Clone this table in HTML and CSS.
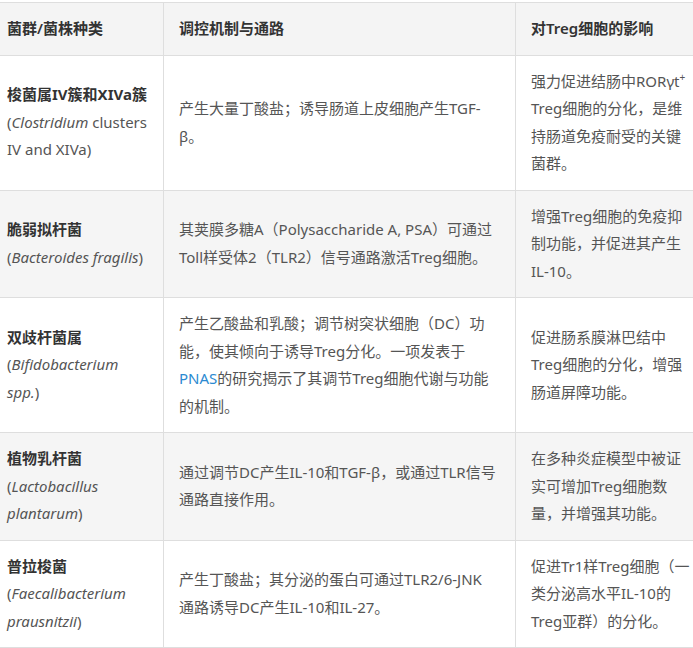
FILE: index.html
```html
<!DOCTYPE html>
<html>
<head>
  <title>肠道菌群与Treg细胞</title>
  <link rel="stylesheet" href="styles.css">
</head>
<body>

  <div class="table-wrap">
    <table class="flora-table">
      <colgroup>
        <col class="col-name">
        <col class="col-mech">
        <col class="col-effect">
      </colgroup>
      <thead>
        <tr>
          <th>菌群/菌株种类</th>
          <th class="mech">调控机制与通路</th>
          <th>对Treg细胞的影响</th>
        </tr>
      </thead>
      <tbody>
        <tr>
          <td><strong>梭菌属IV簇和XIVa簇</strong><br>(<em>Clostridium</em> clusters IV and XIVa)</td>
          <td class="mech">产生大量丁酸盐；诱导肠道上皮细胞产生TGF-β。</td>
          <td>强力促进结肠中RORγt<sup>+</sup> Treg细胞的分化，是维持肠道免疫耐受的关键菌群。</td>
        </tr>
        <tr class="alt">
          <td><strong>脆弱拟杆菌</strong><br>(<em>Bacteroides fragilis</em>)</td>
          <td class="mech">其荚膜多糖A（Polysaccharide A, PSA）可通过Toll样受体2（TLR2）信号通路激活Treg细胞。</td>
          <td>增强Treg细胞的免疫抑制功能，并促进其产生IL-10。</td>
        </tr>
        <tr>
          <td><strong>双歧杆菌属</strong><br>(<em>Bifidobacterium spp.</em>)</td>
          <td class="mech">产生乙酸盐和乳酸；调节树突状细胞（DC）功能，使其倾向于诱导Treg分化。一项发表于<a href="#" class="ref">PNAS</a>的研究揭示了其调节Treg细胞代谢与功能的机制。</td>
          <td>促进肠系膜淋巴结中Treg细胞的分化，增强肠道屏障功能。</td>
        </tr>
        <tr class="alt">
          <td><strong>植物乳杆菌</strong><br>(<em>Lactobacillus plantarum</em>)</td>
          <td class="mech">通过调节DC产生IL-10和TGF-β，或通过TLR信号通路直接作用。</td>
          <td>在多种炎症模型中被证实可增加Treg细胞数量，并增强其功能。</td>
        </tr>
        <tr>
          <td><strong>普拉梭菌</strong><br>(<em>Faecalibacterium prausnitzii</em>)</td>
          <td class="mech">产生丁酸盐；其分泌的蛋白可通过TLR2/6-JNK<span class="nobr">通路</span>诱导DC产生IL-10和IL-27。</td>
          <td>促进Tr1样Treg细胞（一类分泌高水平IL-10的Treg亚群）的分化。</td>
        </tr>
      </tbody>
    </table>
  </div>

</body>
</html>
```

FILE: styles.css
```css
body {
  margin: 0;
  padding: 0;
  background: #ffffff;
  font-family: 'Noto Sans', 'Noto Sans CJK SC', sans-serif;
  overflow: hidden;
}

.table-wrap {
  padding-top: 2px;
  margin-left: -9px;
}

.flora-table {
  border-collapse: collapse;
  table-layout: fixed;
  width: 716px;
  font-size: 15px;
  line-height: 27.5px;
  color: #555;
}

.col-name {
  width: 172px;
}

.col-mech {
  width: 352px;
}

.col-effect {
  width: 192px;
}

th, td {
  box-sizing: border-box;
  border: 1px solid #dedede;
  padding: 12px 15px 12px 15px;
  vertical-align: middle;
  text-align: left;
}

/* middle column wraps a little earlier */
.mech {
  padding-right: 18px;
}

.nobr {
  white-space: nowrap;
}

th {
  background: #f4f4f4;
  color: #333;
  font-weight: 600;
}

td strong {
  color: #333;
  font-weight: 700;
}

tr.alt td {
  background: #f5f5f5;
}

sup {
  font-size: 10px;
  line-height: 0;
  vertical-align: 6px;
}

.ref {
  color: #2b8ad1;
  text-decoration: none;
}
```
